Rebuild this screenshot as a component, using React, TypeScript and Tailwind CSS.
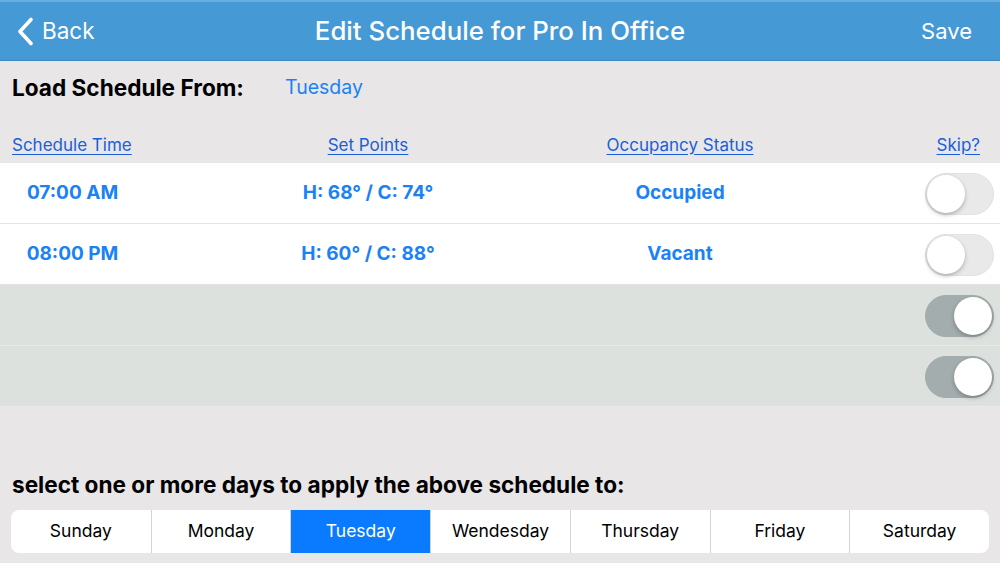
import React, { useState } from 'react';

type Row = { time: string; points: string; status: string; skip: boolean; empty?: boolean };

const ROWS: Row[] = [
  { time: '07:00 AM', points: 'H: 68° / C: 74°', status: 'Occupied', skip: false },
  { time: '08:00 PM', points: 'H: 60° / C: 88°', status: 'Vacant', skip: false },
  { time: '', points: '', status: '', skip: true, empty: true },
  { time: '', points: '', status: '', skip: true, empty: true },
];

const DAYS = ['Sunday', 'Monday', 'Tuesday', 'Wendesday', 'Thursday', 'Friday', 'Saturday'];

const Toggle = ({ on, onClick }: { on: boolean; onClick: () => void }) => (
  <button
    onClick={onClick}
    className={`relative w-[69px] h-[42px] rounded-full border transition-colors ${
      on ? 'bg-[#a3adad] border-[#a3adad]' : 'bg-[#e9e9ea] border-[#e2e2e3]'
    }`}
  >
    <span
      className={`absolute top-[1px] w-[38px] h-[38px] rounded-full bg-white shadow-[0_2px_4px_rgba(0,0,0,0.25)] ${
        on ? 'left-[28px]' : 'left-[1px]'
      }`}
    />
  </button>
);

const App: React.FC = () => {
  const [rows, setRows] = useState(ROWS);
  const [day, setDay] = useState('Tuesday');

  const toggle = (i: number) => setRows(rows.map((r, j) => (j === i ? { ...r, skip: !r.skip } : r)));

  return (
    <div className="w-[1000px] h-[563px] overflow-hidden bg-[#e8e6e7] flex flex-col font-['Inter',sans-serif]">
      <header className="h-[61px] bg-[#4599d4] border-t-2 border-t-[#6aaee0] border-b border-b-[#3b88c0] grid grid-cols-[1fr_auto_1fr] items-center px-[17px] text-white shrink-0">
        <button className="flex items-center gap-[8px] text-[22.5px] leading-none justify-self-start">
          <svg width="17" height="29" viewBox="0 0 17 29" fill="none">
            <path d="M14 2.5 L3 14.5 L14 26.5" stroke="white" strokeWidth="3.6" strokeLinecap="round" strokeLinejoin="round" />
          </svg>
          Back
        </button>
        <h1 className="text-[25.8px] font-medium">Edit Schedule for Pro In Office</h1>
        <button className="text-[22px] mr-[11px] justify-self-end">Save</button>
      </header>

      <div className="h-[54px] flex items-center px-[12px] shrink-0">
        <span className="text-[22.6px] font-bold text-black w-[273px]">Load Schedule From:</span>
        <span className="text-[19.5px] text-[#1a82f5]">Tuesday</span>
      </div>

      <div className="h-[48px] flex items-center pt-[13px] text-[17px] text-[#1a5fd6] underline underline-offset-[3px] shrink-0">
        <span className="w-[145px] pl-[12px]">Schedule Time</span>
        <span className="w-[446px] text-center">Set Points</span>
        <span className="w-[178px] text-center">Occupancy Status</span>
        <span className="flex-1 text-right pr-[20px]">Skip?</span>
      </div>

      <div className="flex flex-col">
        {rows.map((r, i) => (
          <div
            key={i}
            className={`h-[61px] flex items-center pt-[1px] border-b ${
              r.empty ? 'bg-[#dde1de] border-[#e8ebe9]' : 'bg-white border-[#e3e3e3]'
            }`}
          >
            <span className="w-[145px] text-center text-[19px] font-bold text-[#1a82f5]">{r.time}</span>
            <span className="w-[446px] text-center text-[19px] font-bold text-[#1a82f5]">{r.points}</span>
            <span className="w-[178px] text-center text-[19px] font-bold text-[#1a82f5]">{r.status}</span>
            <div className="flex-1 flex justify-end pr-[6px]">
              <Toggle on={r.skip} onClick={() => toggle(i)} />
            </div>
          </div>
        ))}
      </div>

      <div className="flex-1 flex flex-col justify-end px-[11px] pb-[10px]">
        <p className="text-[22.6px] font-bold text-black pl-[1px] mb-[8px]">select one or more days to apply the above schedule to:</p>
        <div className="h-[43px] grid grid-cols-7 bg-white rounded-[8px] overflow-hidden">
          {DAYS.map((d, i) => (
            <button
              key={d}
              onClick={() => setDay(d)}
              className={`text-[17.5px] ${i > 0 ? 'border-l border-[#d4d4d6]' : ''} ${
                day === d ? 'bg-[#0a7aff] text-white' : 'text-black'
              }`}
            >
              {d}
            </button>
          ))}
        </div>
      </div>
    </div>
  );
};

export default App;
